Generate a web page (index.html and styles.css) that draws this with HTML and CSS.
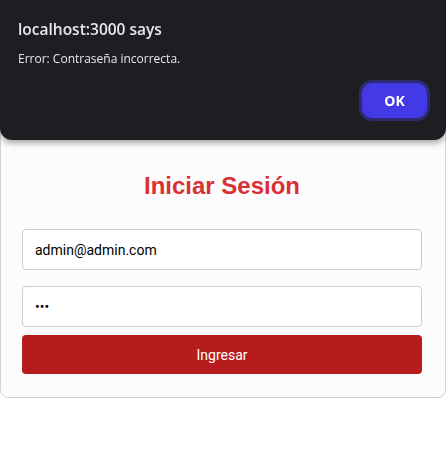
FILE: index.html
```html
<!DOCTYPE html>
<html lang="es">
<head>
<meta charset="utf-8">
<title>Login</title>
<link rel="stylesheet" href="styles.css">
</head>
<body>
<div class="card">
  <h2 class="title">Iniciar Sesión</h2>
  <form class="form">
    <input class="field" type="email" value="admin@admin.com">
    <input class="field field-pass" type="password" value="123">
    <button class="submit" type="button">Ingresar</button>
  </form>
</div>
<div class="dialog">
  <div class="dialog-title">localhost:3000 says</div>
  <div class="dialog-msg">Error: Contraseña incorrecta.</div>
  <div class="dialog-actions">
    <button class="ok" type="button">OK</button>
  </div>
</div>
</body>
</html>
```
FILE: styles.css
```css
html, body {
  margin: 0;
  padding: 0;
  background: #ffffff;
  font-family: Roboto, "Liberation Sans", sans-serif;
}
.card {
  box-sizing: border-box;
  width: 100%;
  margin-top: 40px;
  padding: 131px 23px 23px 21px;
  background: #fcfcfc;
  border: 1px solid #d2d2d2;
  border-radius: 8px;
}
.title {
  margin: 0 0 29px;
  text-align: center;
  font-family: "Liberation Sans", Arial, sans-serif;
  font-weight: bold;
  font-size: 24px;
  color: #d93035;
}
.form {
  display: flex;
  flex-direction: column;
}
.field {
  box-sizing: border-box;
  height: 41px;
  width: 100%;
  margin: 0 0 16px;
  padding: 0 12px;
  border: 1px solid #cccccc;
  border-radius: 4px;
  background: #ffffff;
  font-family: Roboto, "Liberation Sans", sans-serif;
  font-size: 14px;
  color: #000000;
}
.field-pass {
  margin-bottom: 8px;
}
.submit {
  height: 39px;
  width: 100%;
  border: none;
  border-radius: 4px;
  background: #b71c1d;
  color: #ffffff;
  font-family: Roboto, "Liberation Sans", sans-serif;
  font-size: 14px;
}
.dialog {
  position: fixed;
  top: 0;
  left: 0;
  right: 0;
  height: 140px;
  box-sizing: border-box;
  padding: 19px 16px 0 18px;
  background: #1e1d22;
  border-radius: 0 0 12px 12px;
  box-shadow: 0 3px 6px rgba(0, 0, 0, 0.35);
  color: #e8e8ec;
  font-family: "Open Sans", "Noto Sans", sans-serif;
}
.dialog-title {
  font-size: 15.5px;
  font-weight: 600;
  line-height: 20px;
}
.dialog-msg {
  margin-top: 12px;
  font-size: 12px;
  line-height: 16px;
}
.dialog-actions {
  display: flex;
  justify-content: flex-end;
  margin-top: 13px;
}
.ok {
  width: 71px;
  height: 41px;
  box-sizing: border-box;
  border: 3px solid #2d2a70;
  border-radius: 13px;
  background: #4339e6;
  color: #ffffff;
  font-family: "Open Sans", "Noto Sans", sans-serif;
  font-weight: bold;
  font-size: 14px;
  padding: 0;
}
```
